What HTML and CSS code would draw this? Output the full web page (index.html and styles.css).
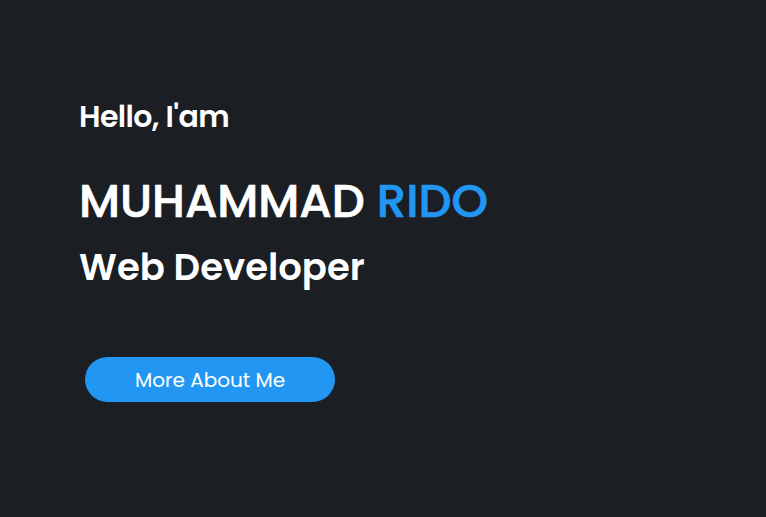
FILE: index.html
```html
<!DOCTYPE html>
<html lang="en">
<head>
<meta charset="utf-8">
<title>Muhammad Rido</title>
<link rel="stylesheet" href="styles.css">
</head>
<body>
<section class="hero">
  <h3 class="hello">Hello, I'am</h3>
  <h1 class="name">MUHAMMAD <span class="accent">RIDO</span></h1>
  <h2 class="role">Web Developer</h2>
  <a class="btn" href="#">More About Me</a>
</section>
</body>
</html>
```
FILE: styles.css
```css
* { box-sizing: border-box; }
html, body { margin: 0; padding: 0; }
body {
  background: #1b1e22;
  color: #ffffff;
  font-family: "Poppins", Inter, "Noto Sans", sans-serif;
  height: 517px;
}
.hero {
  display: flex;
  flex-direction: column;
  align-items: flex-start;
  padding: 97px 0 0 79px;
}
.hello {
  margin: 0;
  font-size: 30px;
  font-weight: 600;
  line-height: 40px;
  letter-spacing: -0.6px;
}
.name {
  margin: 36px 0 0;
  font-size: 46.5px;
  font-weight: 500;
  line-height: 56px;
  -webkit-text-stroke: 0.7px currentColor;
}
.accent { color: #2196f3; }
.role {
  margin: 15px 0 0;
  font-size: 37px;
  font-weight: 600;
  line-height: 46px;
}
.btn {
  margin: 67px 0 0 6px;
  width: 250px;
  height: 45px;
  border-radius: 23px;
  background: #2196f3;
  color: #fff;
  text-decoration: none;
  font-size: 20px;
  display: flex;
  align-items: center;
  justify-content: center;
}
```
